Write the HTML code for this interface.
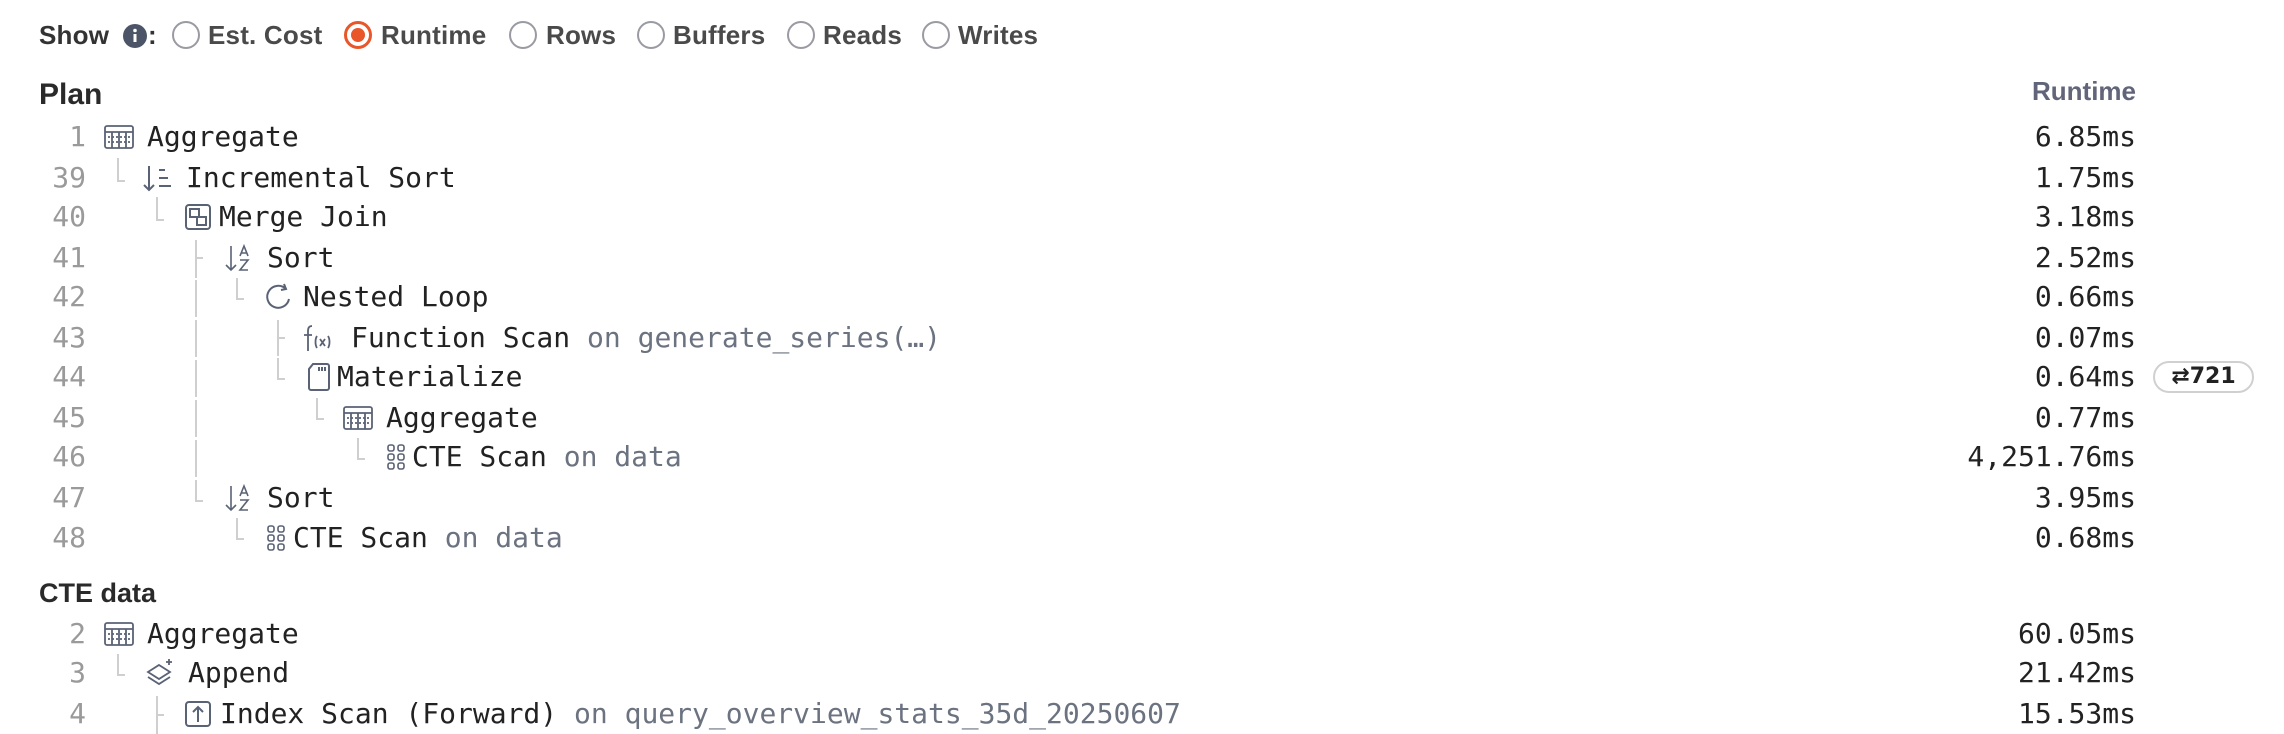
<!DOCTYPE html>
<html><head><meta charset="utf-8"><style>
*{margin:0;padding:0;box-sizing:border-box}
body{width:2284px;height:734px;background:#fff;position:relative;overflow:hidden;font-family:"Liberation Sans",sans-serif}
.a{position:absolute}
.sh{top:17px;height:36px;line-height:36px;font-size:26px;font-weight:bold;color:#4a4a4a;white-space:nowrap;letter-spacing:0.2px}
.rd{position:absolute;top:21px;width:28px;height:28px;border:2px solid #9a9aa3;border-radius:50%}
.rd.on{border:3px solid #e8562a}
.rd.on:after{content:"";position:absolute;left:4px;top:4px;width:14px;height:14px;border-radius:50%;background:#e8562a}
h2{position:absolute;font-size:30px;font-weight:bold;color:#2a2a2a;left:39px}
.ln,.t,.v{position:absolute;height:40px;line-height:40px;font-family:"DejaVu Sans Mono","Liberation Mono",monospace;font-size:28px;white-space:nowrap}
.ln{right:2198px;color:#9a9a9a;text-align:right}
.t{color:#222}
.t span{color:#6b7280}
.v{right:148px;color:#222;text-align:right}
.ic{position:absolute;width:32px;height:32px}
.vl{position:absolute;width:2px;background:#cfcfcf}
.hl{position:absolute;height:2px;width:8px;background:#cfcfcf}
</style></head><body>
<div class="a sh" style="left:39px;color:#333">Show</div>
<svg class="a" style="left:122px;top:23px" width="26" height="26" viewBox="0 0 26 26"><circle cx="13" cy="13" r="12" fill="#4b5567"/><rect x="11.5" y="11" width="3" height="8" fill="#fff"/><circle cx="13" cy="7.5" r="1.8" fill="#fff"/></svg>
<div class="a sh" style="left:148px;color:#333">:</div>
<div class="rd" style="left:172px"></div><div class="a sh" style="left:208px">Est. Cost</div>
<div class="rd on" style="left:344px"></div><div class="a sh" style="left:381px">Runtime</div>
<div class="rd" style="left:509px"></div><div class="a sh" style="left:546px">Rows</div>
<div class="rd" style="left:637px"></div><div class="a sh" style="left:673px">Buffers</div>
<div class="rd" style="left:787px"></div><div class="a sh" style="left:823px">Reads</div>
<div class="rd" style="left:922px"></div><div class="a sh" style="left:958px">Writes</div>

<h2 style="top:78px">Plan</h2>
<div class="a" style="right:148px;top:76px;font-size:26px;font-weight:bold;color:#62657a">Runtime</div>

<div class="vl" style="left:117px;top:158px;height:24px"></div><div class="hl" style="left:117px;top:180px"></div>
<div class="vl" style="left:156px;top:197px;height:24px"></div><div class="hl" style="left:156px;top:219px"></div>
<div class="vl" style="left:195px;top:240px;height:38px"></div><div class="hl" style="left:195px;top:257px"></div>
<div class="vl" style="left:195px;top:280px;height:37px"></div>
<div class="vl" style="left:195px;top:320px;height:37px"></div>
<div class="vl" style="left:195px;top:360px;height:37px"></div>
<div class="vl" style="left:195px;top:400px;height:37px"></div>
<div class="vl" style="left:195px;top:440px;height:37px"></div>
<div class="vl" style="left:195px;top:480px;height:22px"></div><div class="hl" style="left:195px;top:500px"></div>
<div class="vl" style="left:236px;top:278px;height:22px"></div><div class="hl" style="left:236px;top:298px"></div>
<div class="vl" style="left:277px;top:320px;height:36px"></div><div class="hl" style="left:277px;top:337px"></div>
<div class="vl" style="left:277px;top:358px;height:22px"></div><div class="hl" style="left:277px;top:378px"></div>
<div class="vl" style="left:316px;top:398px;height:22px"></div><div class="hl" style="left:316px;top:418px"></div>
<div class="vl" style="left:357px;top:438px;height:22px"></div><div class="hl" style="left:357px;top:458px"></div>
<div class="vl" style="left:236px;top:518px;height:22px"></div><div class="hl" style="left:236px;top:538px"></div>
<div class="vl" style="left:117px;top:654px;height:22px"></div><div class="hl" style="left:117px;top:674px"></div>
<div class="vl" style="left:156px;top:696px;height:38px"></div><div class="hl" style="left:156px;top:714px"></div>

<svg width="0" height="0" style="position:absolute"><defs>
<g id="agg" fill="none" stroke="#5a6275" stroke-width="1.8"><rect x="2" y="5" width="28" height="22" rx="2"/><path d="M2 11h28M9 11v16M16 11v16M23 11v16"/><path d="M5 16h22M5 21h22" stroke-dasharray="2 2"/></g>
</defs></svg>

<div class="ln" style="top:117px">1</div>
<svg class="ic" style="left:103px;top:121px" viewBox="0 0 32 32"><use href="#agg"/></svg>
<div class="t" style="left:147px;top:117px">Aggregate</div><div class="v" style="top:117px">6.85ms</div>

<div class="ln" style="top:158px">39</div>
<svg class="ic" style="left:141px;top:162px" viewBox="0 0 32 32" fill="none" stroke="#5a6275" stroke-width="2"><path d="M8 4v24M3 23l5 5 5-5M18 8h6M18 16h9M18 24h12"/></svg>
<div class="t" style="left:186px;top:158px">Incremental Sort</div><div class="v" style="top:158px">1.75ms</div>

<div class="ln" style="top:197px">40</div>
<svg class="ic" style="left:182px;top:201px" viewBox="0 0 32 32" fill="none" stroke="#5a6275" stroke-width="2"><rect x="4" y="4" width="24" height="24" rx="3"/><path d="M8 8h9v8h7v8h-9v-8H8z"/></svg>
<div class="t" style="left:219px;top:197px">Merge Join</div><div class="v" style="top:197px">3.18ms</div>

<div class="ln" style="top:238px">41</div>
<svg class="ic" style="left:223px;top:242px" viewBox="0 0 32 32" fill="none" stroke="#5a6275" stroke-width="2"><path d="M8 4v24M3 23l5 5 5-5M17 14l4-10 4 10M18 11h6M17 18h8l-8 10h8" stroke-width="1.6"/></svg>
<div class="t" style="left:267px;top:238px">Sort</div><div class="v" style="top:238px">2.52ms</div>

<div class="ln" style="top:277px">42</div>
<svg class="ic" style="left:262px;top:281px" viewBox="0 0 32 32" fill="none" stroke="#5a6275" stroke-width="2"><path d="M24 8A11 11 0 1 0 27 18M22 3l2 5-5 1"/></svg>
<div class="t" style="left:303px;top:277px">Nested Loop</div><div class="v" style="top:277px">0.66ms</div>

<div class="ln" style="top:318px">43</div>
<svg class="ic" style="left:300px;top:322px" viewBox="0 0 32 32" fill="none" stroke="#5a6275" stroke-width="1.8"><path d="M12 4c-3 0-4 2-4 5v20M4 13h8M17 14c-2 3-2 9 0 12M28 14c2 3 2 9 0 12M20 17l5 7M25 17l-5 7"/></svg>
<div class="t" style="left:351px;top:318px">Function Scan <span>on generate_series(…)</span></div><div class="v" style="top:318px">0.07ms</div>

<div class="ln" style="top:357px">44</div>
<svg class="ic" style="left:302px;top:361px" viewBox="0 0 32 32" fill="none" stroke="#5a6275" stroke-width="2"><path d="M11 3h14a2 2 0 0 1 2 2v22a2 2 0 0 1-2 2H9a2 2 0 0 1-2-2V8z M17 6v4M20 6v4M23 6v4"/></svg>
<div class="t" style="left:337px;top:357px">Materialize</div><div class="v" style="top:357px">0.64ms</div>
<div class="a" style="left:2153px;top:361px;width:101px;height:32px;border:2px solid #d0d0d0;border-radius:16px;font-size:22px;font-weight:bold;color:#222;line-height:28px;text-align:center;font-family:'DejaVu Sans',sans-serif">⇄721</div>

<div class="ln" style="top:398px">45</div>
<svg class="ic" style="left:342px;top:402px" viewBox="0 0 32 32"><use href="#agg"/></svg>
<div class="t" style="left:386px;top:398px">Aggregate</div><div class="v" style="top:398px">0.77ms</div>

<div class="ln" style="top:437px">46</div>
<svg class="ic" style="left:382px;top:441px" viewBox="0 0 32 32" fill="none" stroke="#5a6275" stroke-width="1.6"><rect x="6" y="4" width="6" height="6" rx="2"/><rect x="16" y="4" width="6" height="6" rx="2"/><rect x="6" y="13" width="6" height="6" rx="2"/><rect x="16" y="13" width="6" height="6" rx="2"/><rect x="6" y="22" width="6" height="6" rx="2"/><rect x="16" y="22" width="6" height="6" rx="2"/></svg>
<div class="t" style="left:412px;top:437px">CTE Scan <span>on data</span></div><div class="v" style="top:437px">4,251.76ms</div>

<div class="ln" style="top:478px">47</div>
<svg class="ic" style="left:223px;top:482px" viewBox="0 0 32 32" fill="none" stroke="#5a6275" stroke-width="2"><path d="M8 4v24M3 23l5 5 5-5M17 14l4-10 4 10M18 11h6M17 18h8l-8 10h8" stroke-width="1.6"/></svg>
<div class="t" style="left:267px;top:478px">Sort</div><div class="v" style="top:478px">3.95ms</div>

<div class="ln" style="top:518px">48</div>
<svg class="ic" style="left:262px;top:522px" viewBox="0 0 32 32" fill="none" stroke="#5a6275" stroke-width="1.6"><rect x="6" y="4" width="6" height="6" rx="2"/><rect x="16" y="4" width="6" height="6" rx="2"/><rect x="6" y="13" width="6" height="6" rx="2"/><rect x="16" y="13" width="6" height="6" rx="2"/><rect x="6" y="22" width="6" height="6" rx="2"/><rect x="16" y="22" width="6" height="6" rx="2"/></svg>
<div class="t" style="left:293px;top:518px">CTE Scan <span>on data</span></div><div class="v" style="top:518px">0.68ms</div>

<h2 style="top:578px;font-size:27px">CTE data</h2>

<div class="ln" style="top:614px">2</div>
<svg class="ic" style="left:103px;top:618px" viewBox="0 0 32 32"><use href="#agg"/></svg>
<div class="t" style="left:147px;top:614px">Aggregate</div><div class="v" style="top:614px">60.05ms</div>

<div class="ln" style="top:653px">3</div>
<svg class="ic" style="left:144px;top:657px" viewBox="0 0 32 32" fill="none" stroke="#5a6275" stroke-width="1.8"><path d="M15 8l11 7-11 7-11-7z M4 20l11 7 11-7M25 2v6M22 5h6"/></svg>
<div class="t" style="left:188px;top:653px">Append</div><div class="v" style="top:653px">21.42ms</div>

<div class="ln" style="top:694px">4</div>
<svg class="ic" style="left:182px;top:698px" viewBox="0 0 32 32" fill="none" stroke="#5a6275" stroke-width="2"><rect x="4" y="4" width="24" height="24" rx="3"/><path d="M16 24V9M11 14l5-5 5 5"/></svg>
<div class="t" style="left:220px;top:694px">Index Scan (Forward) <span>on query_overview_stats_35d_20250607</span></div><div class="v" style="top:694px">15.53ms</div>
</body></html>
